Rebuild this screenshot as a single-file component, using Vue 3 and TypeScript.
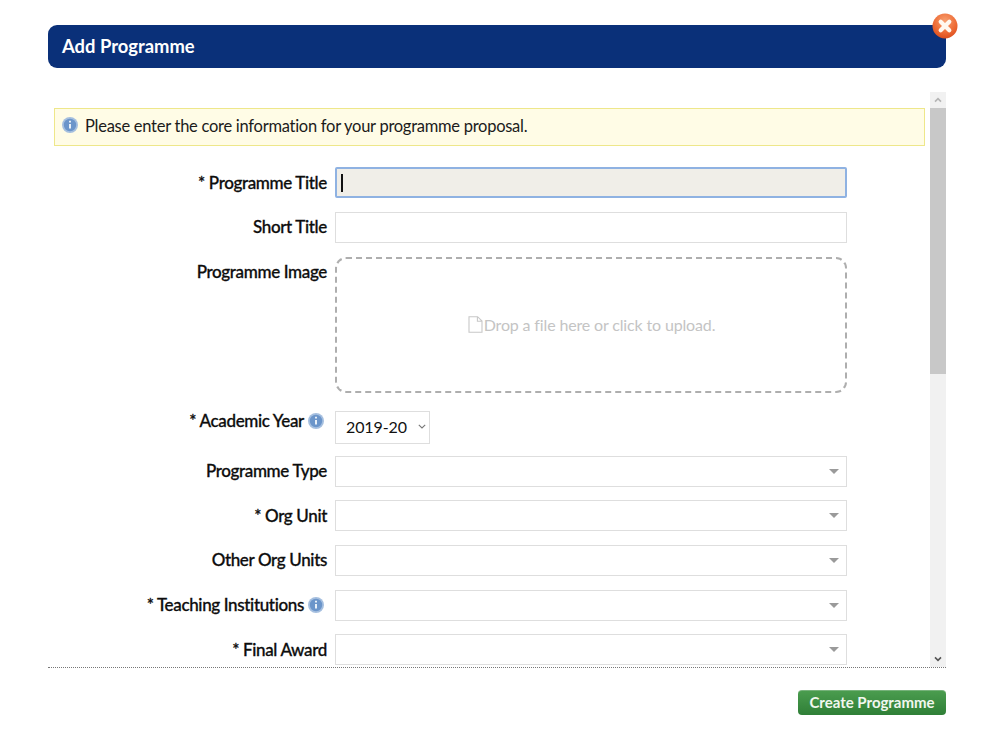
<script setup lang="ts">
interface Row { label: string; required: boolean; info: boolean }
const selects: Row[] = [
  { label: 'Programme Type', required: false, info: false },
  { label: 'Org Unit', required: true, info: false },
  { label: 'Other Org Units', required: false, info: false },
  { label: 'Teaching Institutions', required: true, info: true },
  { label: 'Final Award', required: true, info: false },
]
</script>

<template>
  <div class="modal">
    <header class="head">
      <h1>Add Programme</h1>
      <button class="close" aria-label="Close">
        <svg width="26" height="26" viewBox="0 0 26 26">
          <defs>
            <radialGradient id="cg" cx="50%" cy="30%" r="75%">
              <stop offset="0" stop-color="#f7a071" />
              <stop offset="0.6" stop-color="#ee6b35" />
              <stop offset="1" stop-color="#d9491a" />
            </radialGradient>
          </defs>
          <circle cx="13" cy="13" r="12.5" fill="url(#cg)" />
          <path d="M8.7 8.7l8.6 8.6M17.3 8.7l-8.6 8.6" stroke="#fff8f0" stroke-width="4.2" stroke-linecap="round" />
        </svg>
      </button>
    </header>

    <section class="body">
      <div class="content">
        <div class="alert">
          <svg class="info alert-icon" viewBox="0 0 16 16">
            <circle cx="8" cy="8" r="8" fill="#a5bfdf" />
            <circle cx="8" cy="8" r="6.2" fill="#6b95ca" />
            <path d="M8 3.8v1.8M8 6.9v4.6" stroke="#e8f0f8" stroke-width="2" />
          </svg>
          <span>Please enter the core information for your programme proposal.</span>
        </div>

        <form class="form">
          <div class="row">
            <label class="lbl"><span>* Programme Title</span></label>
            <div class="input focus"><i class="caret"></i></div>
          </div>
          <div class="row">
            <label class="lbl"><span>Short Title</span></label>
            <div class="input"></div>
          </div>
          <div class="row image-row">
            <label class="lbl"><span>Programme Image</span></label>
            <div class="drop">
              <svg class="file" width="15" height="17" viewBox="0 0 15 17">
                <path d="M1 .7h8.6L14 5v11.3H1zM9.4.7v4.5H14" fill="none" stroke="#c8c8c8" stroke-width="1.1" />
              </svg>
              <span>Drop a file here or click to upload.</span>
            </div>
          </div>
          <div class="row year-row">
            <label class="lbl lbl-up">
              <span>* Academic Year</span>
              <svg class="info" viewBox="0 0 16 16">
                <circle cx="8" cy="8" r="8" fill="#a5bfdf" />
                <circle cx="8" cy="8" r="6.2" fill="#6b95ca" />
                <path d="M8 3.8v1.8M8 6.9v4.6" stroke="#e8f0f8" stroke-width="2" />
              </svg>
            </label>
            <div class="year">
              <span>2019-20</span>
              <svg width="8" height="5" viewBox="0 0 8 5"><path d="M.8.8L4 4l3.2-3.2" fill="none" stroke="#777" stroke-width="1.1" /></svg>
            </div>
          </div>
          <div v-for="r in selects" :key="r.label" class="row">
            <label class="lbl">
              <span>{{ (r.required ? '* ' : '') + r.label }}</span>
              <svg v-if="r.info" class="info" viewBox="0 0 16 16">
                <circle cx="8" cy="8" r="8" fill="#a5bfdf" />
                <circle cx="8" cy="8" r="6.2" fill="#6b95ca" />
                <path d="M8 3.8v1.8M8 6.9v4.6" stroke="#e8f0f8" stroke-width="2" />
              </svg>
            </label>
            <div class="input select"><i class="tri"></i></div>
          </div>
        </form>
      </div>

      <div class="scrollbar">
        <div class="arrow">
          <svg width="8" height="6" viewBox="0 0 8 6"><path d="M1 4.6L4 1.6l3 3" fill="none" stroke="#b5b5b5" stroke-width="1.6" /></svg>
        </div>
        <div class="thumb"></div>
        <div class="arrow down">
          <svg width="8" height="6" viewBox="0 0 8 6"><path d="M1 1.4l3 3 3-3" fill="none" stroke="#555" stroke-width="1.6" /></svg>
        </div>
      </div>
    </section>

    <footer class="foot">
      <button class="create">Create Programme</button>
    </footer>
  </div>
</template>

<style scoped>
.modal {
  position: relative;
  width: 898px;
  margin: 25px 0 0 48px;
  font-family: Lato, "Open Sans", sans-serif;
  color: #111;
}
.head {
  height: 43px;
  background: #0a3079;
  border-radius: 9px;
  display: flex;
  align-items: center;
  padding: 0 0 2px 14px;
  box-sizing: border-box;
}
.head h1 {
  margin: 0;
  font-size: 18.4px;
  font-weight: 700;
  color: #fff;
}
.close {
  position: absolute;
  top: -12px;
  right: -12px;
  width: 26px;
  height: 26px;
  padding: 0;
  border: 0;
  background: none;
}
.close svg { display: block; }
.body {
  margin-top: 24px;
  height: 575px;
  display: flex;
  border-bottom: 1px dotted #777;
  overflow: hidden;
}
.content {
  flex: 1;
  padding: 16px 5px 0 6px;
}
.alert {
  height: 38px;
  box-sizing: border-box;
  border: 1px solid #eee78a;
  background: #fffce6;
  display: flex;
  align-items: center;
  padding: 0 0 3px 7px;
  font-size: 16.5px;
  letter-spacing: -0.27px;
  color: #1b1b1b;
}
.alert-icon { margin: -2px 7px 0 0; }
.info { width: 16px; height: 16px; flex: none; }
.form {
  margin-top: 21px;
  display: flex;
  flex-direction: column;
  gap: 13.6px;
}
.row {
  display: flex;
  gap: 8px;
}
.lbl {
  width: 273px;
  flex: none;
  box-sizing: border-box;
  display: flex;
  justify-content: flex-end;
  align-items: center;
  gap: 4px;
  height: 31px;
  padding-bottom: 1px;
  font-size: 17px;
  font-weight: 500;
  letter-spacing: -0.35px;
  -webkit-text-stroke: 0.3px #0d0d0d;
  color: #0d0d0d;
  white-space: pre;
}
.lbl:has(.info) { padding-right: 3px; }
.lbl-up { height: 21px; }
.input {
  width: 512px;
  height: 31px;
  box-sizing: border-box;
  border: 1px solid #dedede;
  background: #fff;
  position: relative;
}
.input.focus {
  background: #f0eee8;
  border: 2px solid #8fb2e2;
  border-radius: 2px;
  display: flex;
  align-items: center;
  padding-left: 4px;
}
.caret {
  width: 2px;
  height: 18px;
  background: #111;
}
.tri {
  position: absolute;
  right: 7px;
  top: 12px;
  border-left: 5px solid transparent;
  border-right: 5px solid transparent;
  border-top: 5px solid #9a9a9a;
}
.image-row { margin-top: 0.4px; }
.drop {
  width: 512px;
  height: 136px;
  box-sizing: border-box;
  border: 2px dashed #aeaeae;
  border-radius: 11px;
  display: flex;
  align-items: center;
  justify-content: center;
  gap: 1px;
  font-size: 16px;
  letter-spacing: -0.15px;
  color: #c4c4c4;
}
.drop .file { margin-left: 1px; }
.year-row { margin-top: 4.6px; margin-bottom: -1.6px; }
.year {
  width: 95px;
  height: 33px;
  box-sizing: border-box;
  border: 1px solid #dedede;
  display: flex;
  align-items: center;
  justify-content: space-between;
  padding: 0 3.5px 1px 10px;
  font-size: 16px;
  letter-spacing: -0.1px;
  color: #111;
}
.scrollbar {
  width: 16px;
  flex: none;
  background: #f1f1f1;
  display: flex;
  flex-direction: column;
}
.arrow {
  height: 16px;
  display: flex;
  align-items: center;
  justify-content: center;
}
.thumb {
  height: 266px;
  background: #c8c8c8;
}
.down { margin-top: auto; }
.foot {
  display: flex;
  justify-content: flex-end;
  margin-top: 21.5px;
}
.create {
  width: 148px;
  height: 25.5px;
  padding: 0 0 2px;
  border: 0;
  border-top: 1px solid #76b27a;
  border-radius: 4px;
  background: linear-gradient(#4a9c4e, #2f7f37);
  color: #f1f7ef;
  font-family: inherit;
  font-size: 15px;
  font-weight: 700;
}
</style>
